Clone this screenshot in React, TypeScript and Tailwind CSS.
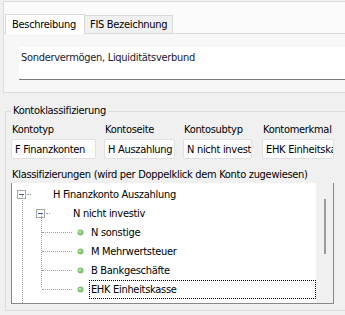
import React from 'react';

const Bullet = () => (
    <svg width="7" height="7" viewBox="0 0 7 7" className="shrink-0">
        <circle cx="3.5" cy="3.5" r="3" fill="#7cc46f" />
        <circle cx="3" cy="3" r="1.3" fill="#b8e6ae" />
    </svg>
);

const Minus = () => (
    <div className="w-[9px] h-[9px] border border-[#a6a6a6] bg-white flex items-center justify-center shrink-0">
        <div className="w-[5px] h-px bg-[#3b5ea8]" />
    </div>
);

const fields = [
    { label: 'Kontotyp', value: 'F Finanzkonten', w: 'w-[85px]', ml: '' },
    { label: 'Kontoseite', value: 'H Auszahlung', w: 'w-[71px]', ml: 'ml-[8px]' },
    { label: 'Kontosubtyp', value: 'N nicht investiv', w: 'w-[69px]', ml: 'ml-[8px]' },
    { label: 'Kontomerkmal', value: 'EHK Einheitskasse', w: 'w-[72px]', ml: 'ml-[10px]' },
];

const leaves = ['N sonstige', 'M Mehrwertsteuer', 'B Bankgeschäfte', 'EHK Einheitskasse'];

export default function App() {
    return (
        <div className="w-[345px] h-[315px] overflow-hidden bg-[#f0f0f0] text-[11px] tracking-[-0.3px] text-black font-['DejaVu_Sans_Condensed','DejaVu_Sans',sans-serif] leading-none whitespace-nowrap">
            {/* Beschreibung panel */}
            <div className="mt-px ml-[3px] h-[92px] border-t border-l border-b border-[#dcdcdc] bg-[#fbfbfb] flex flex-col">
                <div className="flex items-end h-[31px] pl-px">
                    <div className="h-[20px] w-[80px] bg-white border-t border-l border-r border-[#d9d9d9] flex items-center pl-[6px] -mb-px relative z-10">
                        Beschreibung
                    </div>
                    <div className="h-[18px] w-[88px] bg-[#f0f0f0] border-t border-r border-[#d9d9d9] flex items-center pl-[5px]">
                        FIS Bezeichnung
                    </div>
                </div>
                <div className="flex-1 border-t border-[#d9d9d9] bg-[#f7f7f7] pt-[13px] pl-[15px]">
                    <div className="h-[33px] bg-white border-b border-[#7a7a7a] pl-[2px] pt-[5px] text-[#1a1a2e]">
                        Sondervermögen, Liquiditätsverbund
                    </div>
                </div>
            </div>

            {/* Kontoklassifizierung group */}
            <div className="relative mt-[18px] ml-[5px] h-[200px] border-t border-l border-b border-[#dcdcdc]">
                <span className="absolute -top-[7px] left-[5px] bg-[#f0f0f0] px-[2px]">Kontoklassifizierung</span>
                <div className="flex pl-[5px] pt-[12px]">
                    {fields.map((f) => (
                        <div key={f.label} className={`flex flex-col gap-[4px] ${f.ml}`}>
                            <span className="pl-px">{f.label}</span>
                            <div className={`${f.w} h-[20px] bg-[#fdfdfd] border border-[#e0e0e0] rounded-[2px] pl-[3px] flex items-center overflow-hidden`}>
                                {f.value}
                            </div>
                        </div>
                    ))}
                </div>
                <div className="pl-[6px] pt-[10px]">Klassifizierungen (wird per Doppelklick dem Konto zugewiesen)</div>
                <div className="ml-[5px] mt-[3px] w-[323px] h-[121px] bg-white border-l border-b border-r border-[#888] flex overflow-hidden">
                    <div className="flex-1 relative pt-[2px] overflow-hidden">
                        {/* tree lines */}
                        <div className="absolute left-[10px] top-[12px] h-[120px] border-l border-dotted border-[#a0a0a0]" />
                        <div className="absolute left-[29px] top-[31px] h-[73px] border-l border-dotted border-[#a0a0a0]" />
                        <div className="flex items-center h-[19px] pl-[5px]">
                            <Minus />
                            <div className="w-[4px] border-t border-dotted border-[#a0a0a0] ml-px" />
                            <span className="ml-[22px]">H Finanzkonto Auszahlung</span>
                        </div>
                        <div className="flex items-center h-[19px] pl-[24px]">
                            <Minus />
                            <div className="w-[4px] border-t border-dotted border-[#a0a0a0] ml-px" />
                            <span className="ml-[23px]">N nicht investiv</span>
                        </div>
                        {leaves.map((l, i) => (
                            <div key={l} className="flex items-center h-[19px] pl-[30px]">
                                <div className="w-[30px] border-t border-dotted border-[#a0a0a0]" />
                                <div className="ml-[5px]"><Bullet /></div>
                                <span className={`ml-[5px] pl-[2px] h-[19px] flex items-center ${i === 3 ? 'outline outline-1 outline-dotted outline-black -outline-offset-1 w-[228px]' : ''}`}>{l}</span>
                            </div>
                        ))}
                        <div className="flex items-center h-[19px] pl-[24px]">
                            <Minus />
                        </div>
                    </div>
                    <div className="w-[17px] bg-[#f0f0f0] flex justify-center pt-[16px]">
                        <div className="w-[2px] h-[55px] bg-[#9b9b9b]" />
                    </div>
                </div>
            </div>
        </div>
    );
}
